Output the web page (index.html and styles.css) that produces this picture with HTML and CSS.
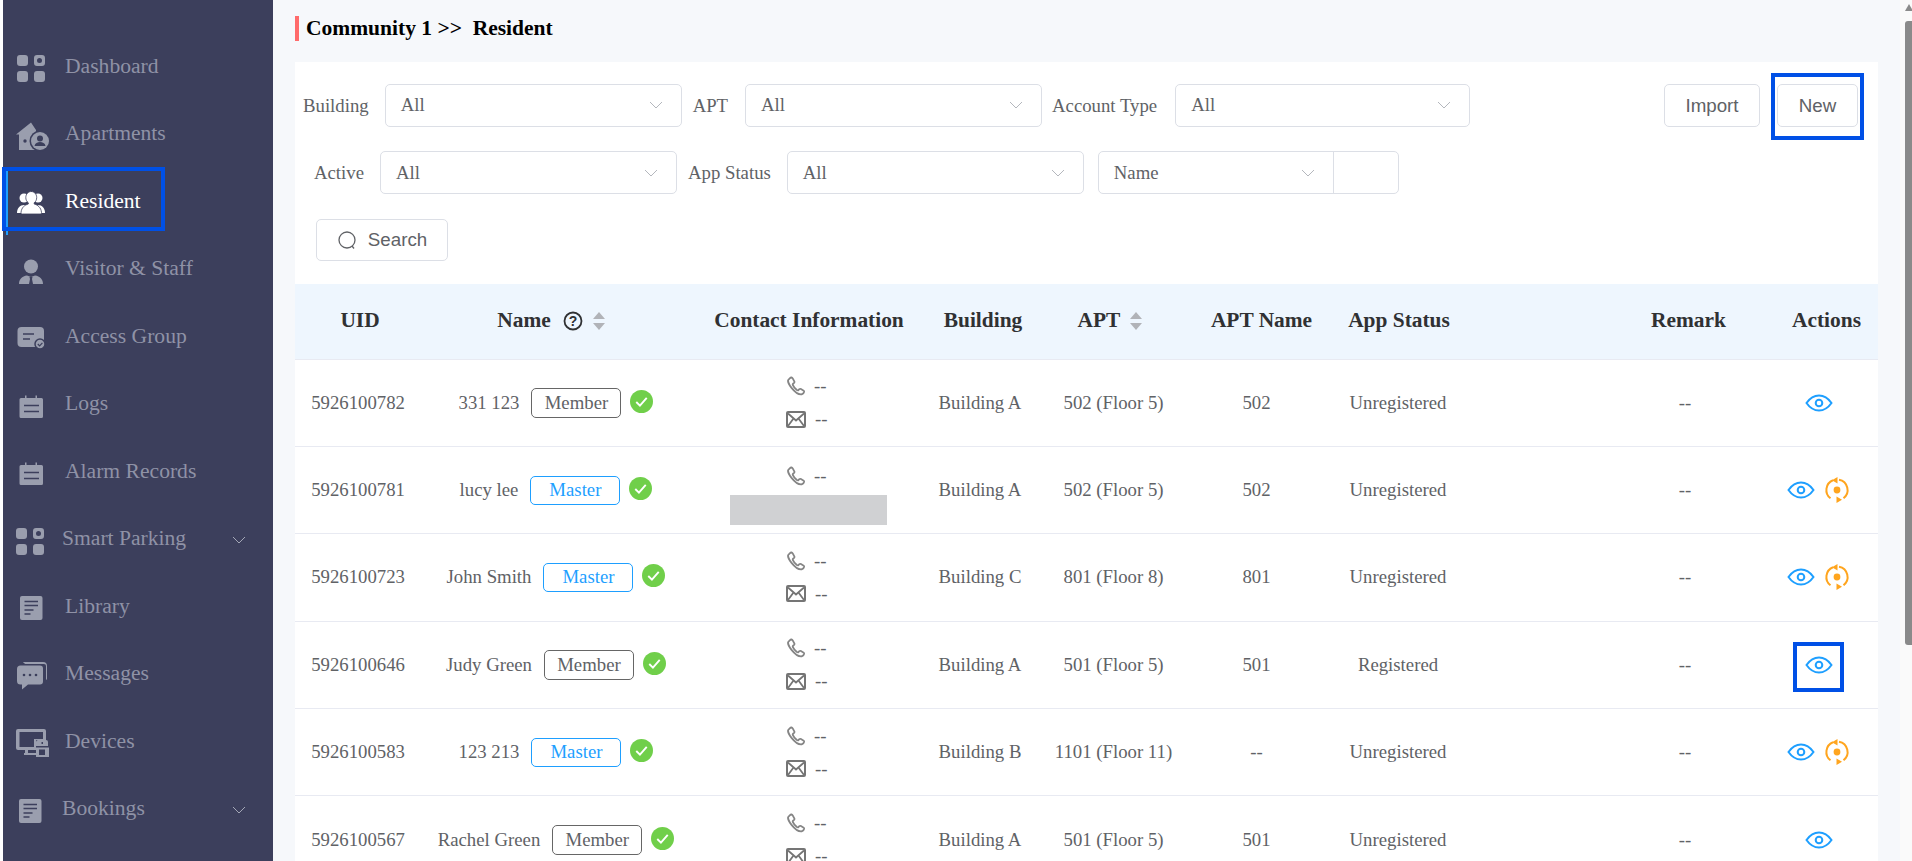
FILE: index.html
```html
<!DOCTYPE html>
<html lang="en">
<head>
<meta charset="utf-8">
<title>Resident</title>
<link rel="stylesheet" href="styles.css">
</head>
<body>
<svg class="defs" width="0" height="0" aria-hidden="true">
  <symbol id="i-grid" viewBox="0 0 32 32">
    <rect x="1" y="5" width="11" height="11" rx="3"/>
    <path fill-rule="evenodd" d="M21 5h5a3 3 0 0 1 3 3v5a3 3 0 0 1-3 3h-5a3 3 0 0 1-3-3V8a3 3 0 0 1 3-3zm2.5 3a2.5 2.5 0 1 0 0 5 2.500 2.500 0 0 0 0-5z"/>
    <rect x="1" y="21" width="11" height="11" rx="3"/>
    <rect x="18" y="21" width="11" height="11" rx="3"/>
  </symbol>
  <symbol id="i-cal" viewBox="0 0 32 32">
    <path d="M5 10h4V7.500h1.500V10h9V7.500H21V10h4.500a1.500 1.500 0 0 1 1.500 1.500v17a1.500 1.500 0 0 1-1.500 1.500H5a1.500 1.500 0 0 1-1.500-1.500v-17A1.500 1.500 0 0 1 5 10z"/>
    <path class="cut" d="M8 17.500h15M8 23.500h15" fill="none" stroke-width="1.500"/>
  </symbol>
  <symbol id="i-doc" viewBox="0 0 32 32">
    <rect x="4" y="6" width="22.500" height="24" rx="2"/>
    <path class="cut" d="M8.500 11.500h13.500M8.500 15.500h13.500M8.500 20h9M8.500 24h6" fill="none" stroke-width="1.500"/>
  </symbol>
  <symbol id="i-phone" viewBox="0 0 20 20">
    <path d="M3.200 1.600 1.500 3.400c-.8 1 .1 4.600 3.300 8.500 3.400 4.300 8 7.200 10.700 6.800 1-.2 2.300-1.700 2.500-2.700.1-.6-.3-1-.8-1.300l-2.500-1.500c-.6-.3-1.200-.3-1.700.2l-1 1c-.5.400-1 .300-1.600-.1-1.700-1.300-3.400-3.400-4.200-5.200-.3-.6-.2-1.100.2-1.500l1-.9c.5-.5.600-1 .3-1.600L6 2c-.7-1.100-1.900-1.300-2.800-.4z" fill="none" stroke="#858585" stroke-width="1.900"/>
  </symbol>
  <symbol id="i-mail" viewBox="0 0 20 17">
    <rect x="1" y="1" width="18" height="15" rx="1" fill="none" stroke="#757575" stroke-width="2"/>
    <path d="M2 2.500 10 9.500 18 2.500M2 15 7.500 7.500M18 15 12.500 7.500" fill="none" stroke="#757575" stroke-width="1.800"/>
  </symbol>
  <symbol id="i-eye" viewBox="0 0 28 18">
    <path d="M1.500 9C5 4 9 1.500 14 1.500S23 4 26.500 9C23 14 19 16.500 14 16.500S5 14 1.500 9z" fill="none" stroke="#1e9fff" stroke-width="2"/>
    <circle cx="14" cy="9" r="3.300" fill="none" stroke="#1e9fff" stroke-width="2"/>
  </symbol>
  <symbol id="i-sync" viewBox="0 0 26 26">
    <path d="M9 3.200A10.500 10.500 0 0 0 6.500 21.300M15 2.700a10.500 10.500 0 0 1 4.500 18.600" fill="none" stroke="#ffa51e" stroke-width="2"/>
    <path d="M13.500 0v6.500L8 3.200zM12.500 26v-6.500l5.500 3.300z" fill="#ffa51e"/>
    <circle cx="13" cy="13" r="3.400" fill="#ffa51e"/>
  </symbol>
  <symbol id="i-ok" viewBox="0 0 22 22">
    <circle cx="11" cy="11" r="11" fill="#70cf4a"/>
    <path d="M6 11.500l3.500 3.500L16 7.500" fill="none" stroke="#fff" stroke-width="1.800"/>
  </symbol>
  <symbol id="i-chev" viewBox="0 0 14 8">
    <path d="M1 1l6 6 6-6" fill="none" stroke="currentColor" stroke-width="1"/>
  </symbol>
</svg>

<div class="app">
  <aside class="sidebar">
    <nav class="menu">
      <a class="item"><svg class="ico"><use href="#i-grid"/></svg><span>Dashboard</span></a>
      <a class="item"><svg class="ico" viewBox="0 0 32 32">
        <path d="M15 4.500 0 16.500h3V32h17V12z"/>
        <circle class="cutf" cx="9" cy="23" r="1.700"/>
        <circle class="cutf" cx="24" cy="23" r="10.500"/>
        <circle cx="24" cy="23" r="9"/>
        <circle class="cutf" cx="24" cy="20.500" r="3"/>
        <path class="cutf" d="M18.500 28c.5-3 3-4 5.500-4s5 1 5.500 4z"/>
      </svg><span>Apartments</span></a>
      <a class="item active"><svg class="ico" viewBox="0 0 32 32">
        <g fill="#fff">
          <circle cx="8" cy="13" r="4.500"/>
          <path d="M1 28c0-5 3-8 7-8s7 3 7 8z"/>
          <circle cx="22" cy="13" r="4.500"/>
          <path d="M15 28c0-5 3-8 7-8s7 3 7 8z"/>
          <path stroke="#3c3f5c" stroke-width=".8" d="M15 6.500c3.300 0 5.700 2.600 5.700 6 0 2.300-1 4.200-2.500 5.300v1.200c3.500 1 6.800 3.300 7.300 8.500.1 1-.5 1.500-1.500 1.500H6.500c-1 0-1.600-.5-1.500-1.500.5-5.200 3.800-7.500 7.300-8.500v-1.200c-1.500-1.100-2.500-3-2.500-5.300 0-3.400 2.400-6 5.700-6z"/>
        </g>
      </svg><span>Resident</span></a>
      <a class="item"><svg class="ico" viewBox="0 0 32 32">
        <circle cx="15" cy="13.500" r="7"/>
        <path d="M11 22.500c-5 .5-8 4-8 8.500h24c0-4.500-3-8-8-8.500l-4 1.500z"/>
        <path class="cutf" d="M13.500 24h3l-.5 2 1 5h-4l1-5z"/>
      </svg><span>Visitor &amp; Staff</span></a>
      <a class="item"><svg class="ico" viewBox="0 0 32 32">
        <rect x="1.500" y="7" width="26.500" height="20" rx="4"/>
        <path class="cut" d="M7 14h11M7 19h7" fill="none" stroke-width="1.500"/>
        <circle cx="24" cy="24" r="5" stroke="#3c3f5c" stroke-width="1.500"/>
        <path class="cut" d="M21.800 24l1.800 1.800 2.800-3" fill="none" stroke-width="1.200"/>
      </svg><span>Access Group</span></a>
      <a class="item"><svg class="ico"><use href="#i-cal"/></svg><span>Logs</span></a>
      <a class="item"><svg class="ico"><use href="#i-cal"/></svg><span>Alarm Records</span></a>
      <a class="item sub"><svg class="ico"><use href="#i-grid"/></svg><span>Smart Parking</span><svg class="chev"><use href="#i-chev"/></svg></a>
      <a class="item"><svg class="ico"><use href="#i-doc"/></svg><span>Library</span></a>
      <a class="item"><svg class="ico" viewBox="0 0 32 32">
        <path d="M5 7.500h20a4 4 0 0 1 4 4V24c0 .8-.4 1.300-1 1.500V11.500a2 2 0 0 0-2-2H8c-1 0-1.800-.6-3-2z" transform="translate(2 -3.500)"/>
        <path d="M4.500 7.500H24a3 3 0 0 1 3 3v13a3 3 0 0 1-3 3H12l-6 5v-5H4.500a3.500 3.500 0 0 1-3.500-3.500v-12a3.500 3.500 0 0 1 3.500-3.500z"/>
        <circle class="cutf" cx="8" cy="17" r="1.300"/><circle class="cutf" cx="14" cy="17" r="1.300"/><circle class="cutf" cx="20" cy="17" r="1.300"/>
      </svg><span>Messages</span></a>
      <a class="item"><svg class="ico" viewBox="0 0 32 32">
        <path fill-rule="evenodd" d="M2 4h26a2 2 0 0 1 2 2v9H20v10H12v3h8v2H8v-2h1v-3H2a2 2 0 0 1-2-2V6a2 2 0 0 1 2-2zm1.500 3v15H18V14h9V7z"/>
        <path fill-rule="evenodd" d="M22 15h8a2 2 0 0 1 2 2v4H20v-4a2 2 0 0 1 2-2zm3.500 2v2h1.500v-2zM20 22.500h13V32H20zm3 2v5.500h6v-5.500z"/>
      </svg><span>Devices</span></a>
      <a class="item sub"><svg class="ico"><use href="#i-doc"/></svg><span>Bookings</span><svg class="chev"><use href="#i-chev"/></svg></a>
    </nav>
  </aside>

  <main class="main">
    <h1 class="crumb">Community 1 &gt;&gt;&nbsp; Resident</h1>
    <section class="card">
      <div class="filters">
        <div class="row row-a">
          <label class="lbl lbl-first">Building</label>
          <div class="sel sel-first"><span>All</span><svg class="chev"><use href="#i-chev"/></svg></div>
          <label class="lbl">APT</label>
          <div class="sel"><span>All</span><svg class="chev"><use href="#i-chev"/></svg></div>
          <label class="lbl lbl-wide">Account Type</label>
          <div class="sel sel-short"><span>All</span><svg class="chev"><use href="#i-chev"/></svg></div>
          <div class="btns">
            <button class="btn btn-import">Import</button>
            <button class="btn btn-new">New</button>
          </div>
        </div>
        <div class="row row-b">
          <label class="lbl">Active</label>
          <div class="sel"><span>All</span><svg class="chev"><use href="#i-chev"/></svg></div>
          <label class="lbl">App Status</label>
          <div class="sel"><span>All</span><svg class="chev"><use href="#i-chev"/></svg></div>
          <div class="combo">
            <div class="combo-sel"><span>Name</span><svg class="chev"><use href="#i-chev"/></svg></div>
            <div class="combo-input"></div>
          </div>
        </div>
        <div class="row row-c">
          <button class="btn btn-search">
            <svg class="mag" viewBox="0 0 20 20"><circle cx="10" cy="10" r="8" fill="none" stroke="#606266" stroke-width="1.300"/><path d="M15 16l2 2.500" fill="none" stroke="#606266" stroke-width="1.300"/></svg>
            Search
          </button>
        </div>
      </div>

      <table class="grid">
        <colgroup>
          <col class="c-uid"><col class="c-name"><col class="c-contact"><col class="c-bld"><col class="c-apt"><col class="c-aptn"><col class="c-status"><col class="c-remark"><col class="c-act">
        </colgroup>
        <thead>
          <tr>
            <th>UID</th>
            <th><span class="th-name">Name
              <svg class="help" viewBox="0 0 20 20"><circle cx="10" cy="10" r="8.500" fill="none" stroke="#303133" stroke-width="1.800"/><text x="10" y="15" text-anchor="middle" class="help-q">?</text></svg>
              <span class="sort"></span></span></th>
            <th>Contact Information</th>
            <th>Building</th>
            <th><span class="th-apt">APT <span class="sort"></span></span></th>
            <th>APT Name</th>
            <th class="st">App Status</th>
            <th class="rem">Remark</th>
            <th>Actions</th>
          </tr>
        </thead>
        <tbody>
          <tr>
            <td class="uid">5926100782</td>
            <td><div class="who"><span>331 123</span><span class="tag member">Member</span><svg class="ok"><use href="#i-ok"/></svg></div></td>
            <td><div class="contact"><div class="cl"><svg class="ph"><use href="#i-phone"/></svg>--</div><div class="cl"><svg class="ml"><use href="#i-mail"/></svg>--</div></div></td>
            <td class="bld">Building A</td><td class="apt">502 (Floor 5)</td><td class="aptn">502</td><td class="st">Unregistered</td><td class="rem">--</td>
            <td class="act"><div class="acts"><svg class="eye"><use href="#i-eye"/></svg></div></td>
          </tr>
          <tr>
            <td class="uid">5926100781</td>
            <td><div class="who"><span>lucy lee</span><span class="tag master">Master</span><svg class="ok"><use href="#i-ok"/></svg></div></td>
            <td><div class="contact contact-blurred"><div class="cl"><svg class="ph"><use href="#i-phone"/></svg>--</div><div class="blur"></div></div></td>
            <td class="bld">Building A</td><td class="apt">502 (Floor 5)</td><td class="aptn">502</td><td class="st">Unregistered</td><td class="rem">--</td>
            <td class="act"><div class="acts"><svg class="eye"><use href="#i-eye"/></svg><svg class="sync"><use href="#i-sync"/></svg></div></td>
          </tr>
          <tr>
            <td class="uid">5926100723</td>
            <td><div class="who"><span>John Smith</span><span class="tag master">Master</span><svg class="ok"><use href="#i-ok"/></svg></div></td>
            <td><div class="contact"><div class="cl"><svg class="ph"><use href="#i-phone"/></svg>--</div><div class="cl"><svg class="ml"><use href="#i-mail"/></svg>--</div></div></td>
            <td class="bld">Building C</td><td class="apt">801 (Floor 8)</td><td class="aptn">801</td><td class="st">Unregistered</td><td class="rem">--</td>
            <td class="act"><div class="acts"><svg class="eye"><use href="#i-eye"/></svg><svg class="sync"><use href="#i-sync"/></svg></div></td>
          </tr>
          <tr>
            <td class="uid">5926100646</td>
            <td><div class="who"><span>Judy Green</span><span class="tag member">Member</span><svg class="ok"><use href="#i-ok"/></svg></div></td>
            <td><div class="contact"><div class="cl"><svg class="ph"><use href="#i-phone"/></svg>--</div><div class="cl"><svg class="ml"><use href="#i-mail"/></svg>--</div></div></td>
            <td class="bld">Building A</td><td class="apt">501 (Floor 5)</td><td class="aptn">501</td><td class="st">Registered</td><td class="rem">--</td>
            <td class="act"><div class="acts"><span class="eye-mark"><svg class="eye"><use href="#i-eye"/></svg></span></div></td>
          </tr>
          <tr>
            <td class="uid">5926100583</td>
            <td><div class="who"><span>123 213</span><span class="tag master">Master</span><svg class="ok"><use href="#i-ok"/></svg></div></td>
            <td><div class="contact"><div class="cl"><svg class="ph"><use href="#i-phone"/></svg>--</div><div class="cl"><svg class="ml"><use href="#i-mail"/></svg>--</div></div></td>
            <td class="bld">Building B</td><td class="apt">1101 (Floor 11)</td><td class="aptn">--</td><td class="st">Unregistered</td><td class="rem">--</td>
            <td class="act"><div class="acts"><svg class="eye"><use href="#i-eye"/></svg><svg class="sync"><use href="#i-sync"/></svg></div></td>
          </tr>
          <tr>
            <td class="uid">5926100567</td>
            <td><div class="who"><span>Rachel Green</span><span class="tag member">Member</span><svg class="ok"><use href="#i-ok"/></svg></div></td>
            <td><div class="contact"><div class="cl"><svg class="ph"><use href="#i-phone"/></svg>--</div><div class="cl"><svg class="ml"><use href="#i-mail"/></svg>--</div></div></td>
            <td class="bld">Building A</td><td class="apt">501 (Floor 5)</td><td class="aptn">501</td><td class="st">Unregistered</td><td class="rem">--</td>
            <td class="act"><div class="acts"><svg class="eye"><use href="#i-eye"/></svg></div></td>
          </tr>
        </tbody>
      </table>
    </section>
  </main>

  <div class="scroll">
    <div class="scroll-up"></div>
    <div class="scroll-thumb"></div>
  </div>
</div>
</body>
</html>
```

FILE: styles.css
```css
*, *::before, *::after { box-sizing: border-box; }
html, body { margin: 0; height: 861px; overflow: hidden; background: #fff; }
body { font-family: "Liberation Serif", "Times New Roman", serif; font-size: 18.75px; color: #606266; }
.defs { position: absolute; }
.app { display: flex; height: 861px; padding-left: 3px; }

/* sidebar */
.sidebar { width: 270px; flex: none; background: #3c3f5c; padding-top: 32.25px; }
.menu { display: flex; flex-direction: column; }
.item { position: relative; display: flex; align-items: center; height: 67.5px; padding-left: 13px; gap: 17px; color: #8f92a6; font-size: 21.6px; white-space: nowrap; }
.ico { width: 32px; height: 32px; flex: none; fill: #9a9eae; overflow: visible; }
.cut { stroke: #3c3f5c; }
.cutf { fill: #3c3f5c; }
.item.sub { gap: 15px; padding-left: 12px; }
.item .chev { position: absolute; left: 229px; top: 31px; width: 14px; height: 8px; color: #a4a7b6; }
.item.active { color: #fff; }
.item.active::before { content: ""; position: absolute; left: 3px; top: 2px; bottom: 0; width: 2px; background: #1e9fff; }
.item.active::after { content: ""; position: absolute; left: -1.500px; top: 0; width: 163.500px; height: 64px; border: 4.500px solid #0050e6; }

/* main */
.main { flex: 1; min-width: 0; background: #f6f8fb; padding: 16px 22px 0 22px; }
.crumb { margin: 0 0 21px; height: 25px; border-left: 4px solid #ff6b6b; padding-left: 7px; font-size: 21.5px; line-height: 24px; font-weight: 700; color: #000; white-space: nowrap; }
.card { background: #fff; }
.filters { padding-top: 22px; }
.row { display: flex; align-items: center; height: 43px; }
.row-a { padding: 0 20px 0 8px; margin-bottom: 24px; }
.row-a .lbl { margin-right: 17px; }
.row-a .lbl-first { margin-right: 16px; }
.row-a .lbl-wide { margin-right: 18px; }
.row-a .sel { margin-right: 10px; padding-bottom: 2px; }
.row-a .sel-first { margin-right: 11px; }
.row-b { padding-left: 19px; margin-bottom: 25px; }
.row-c { padding-left: 21px; margin-bottom: 23px; height: 42px; }
.lbl { margin-right: 16px; white-space: nowrap; }
.sel { width: 297px; height: 43px; margin-right: 11px; flex: none; display: flex; align-items: center; justify-content: space-between; padding: 0 18px 0 15px; border: 1px solid #dcdfe6; border-radius: 5px; color: #606266; }
.row-a .sel-short { width: 295px; }
.sel .chev, .combo-sel .chev { width: 14px; height: 8px; color: #b4b7bd; }
.btns { margin-left: auto; display: flex; gap: 17px; }
.btn { height: 43px; background: #fff; border: 1px solid #dcdfe6; border-radius: 5px; font-family: "Liberation Sans", Arial, sans-serif; font-size: 18.75px; color: #606266; padding: 0; }
.btn-import { width: 96px; }
.btn-new { width: 81px; position: relative; }
.btn-new::after { content: ""; position: absolute; left: -7px; top: -12px; width: 93px; height: 67px; border: 4.500px solid #0050e6; }
.combo { display: flex; width: 301px; height: 43px; margin-left: 3px; border: 1px solid #dcdfe6; border-radius: 5px; }
.combo-sel { width: 235px; display: flex; align-items: center; justify-content: space-between; padding: 0 18px 0 15px; border-right: 1px solid #dcdfe6; }
.combo-input { flex: 1; }
.btn-search { width: 132px; height: 42px; display: flex; align-items: center; justify-content: center; gap: 11px; }
.mag { width: 20px; height: 20px; }

/* table */
.grid { width: 100%; table-layout: fixed; border-collapse: collapse; }
.c-uid { width: 130px; } .c-name { width: 260px; } .c-contact { width: 248px; } .c-bld { width: 100px; }
.c-apt { width: 150px; } .c-aptn { width: 157px; } .c-status { width: 260px; } .c-remark { width: 175px; } .c-act { width: 103px; }
.grid th { height: 75px; background: #eef6fe; font-size: 21.4px; font-weight: 700; color: #303133; padding: 0 0 1px; text-align: center; border-bottom: 1px solid #e8eaf2; white-space: nowrap; }
.grid td { height: 87.4px; padding: 0; text-align: center; border-bottom: 1px solid #e8eaf2; white-space: nowrap; }
.grid th.st { padding-right: 142px; }
.grid th.rem { padding-left: 2px; }
.grid td.st { padding-right: 144px; }
.grid td.rem { padding-right: 5px; }
.grid .uid { padding-right: 4px; }
.grid .bld { padding-right: 6px; }
.grid .apt { padding-left: 11px; }
.grid .aptn { padding-right: 10px; }
.grid .act { padding-right: 16px; }
.th-name { display: inline-flex; align-items: center; margin-right: 8px; }
.th-apt { display: inline-flex; align-items: center; gap: 10px; margin-left: 4px; }
.help { width: 20px; height: 20px; margin: 0 10px 0 12px; }
.help-q { font-family: "Liberation Sans", Arial, sans-serif; font-size: 14px; font-weight: 700; fill: #303133; }
.sort { display: inline-block; position: relative; width: 12px; height: 18px; }
.sort::before, .sort::after { content: ""; position: absolute; left: 0; border-left: 6px solid transparent; border-right: 6px solid transparent; }
.sort::before { top: 0; border-bottom: 7px solid #b1b3b8; }
.sort::after { bottom: 0; border-top: 7px solid #b1b3b8; }
.who { display: flex; align-items: center; justify-content: center; padding-left: 2px; }
.tag { width: 90px; height: 30px; margin-left: 12px; display: flex; align-items: center; justify-content: center; border: 1px solid #666; border-radius: 5px; flex: none; }
.tag.master { border-color: #1e9fff; color: #1e9fff; height: 29px; }
.ok { width: 23px; height: 23px; margin: -3px 0 0 9px; flex: none; }
.contact { display: inline-flex; flex-direction: column; align-items: center; vertical-align: middle; }
.contact-blurred { padding-top: 4px; }
.cl { height: 33px; display: flex; align-items: center; gap: 8px; width: 39px; margin-right: 5px; }
.ph { width: 19px; height: 20px; flex: none; }
.ml { width: 20px; height: 17px; flex: none; margin-left: -1px; margin-right: 1px; }
.blur { width: 157px; height: 30px; margin: 2px 2px 0 0; background: #d0d1d3; }
.acts { display: flex; align-items: center; justify-content: center; gap: 9px; }
.eye { width: 28px; height: 18px; flex: none; }
.sync { width: 26px; height: 26px; flex: none; }
.eye-mark { position: relative; display: flex; }
.eye-mark::after { content: ""; position: absolute; left: -12px; top: -14px; width: 51px; height: 50px; border: 4.500px solid #0050e6; }

/* scrollbar */
.scroll { position: relative; width: 12px; flex: none; background: #fafafa; padding-left: 5px; }
.scroll-up { width: 0; height: 0; margin: 4px 0 10px; border-left: 4px solid transparent; border-right: 4px solid transparent; border-bottom: 7px solid #8a8a8a; }
.scroll-thumb { width: 7px; height: 624px; background: #8a8a8a; border-radius: 3px 0 0 3px; }
```
